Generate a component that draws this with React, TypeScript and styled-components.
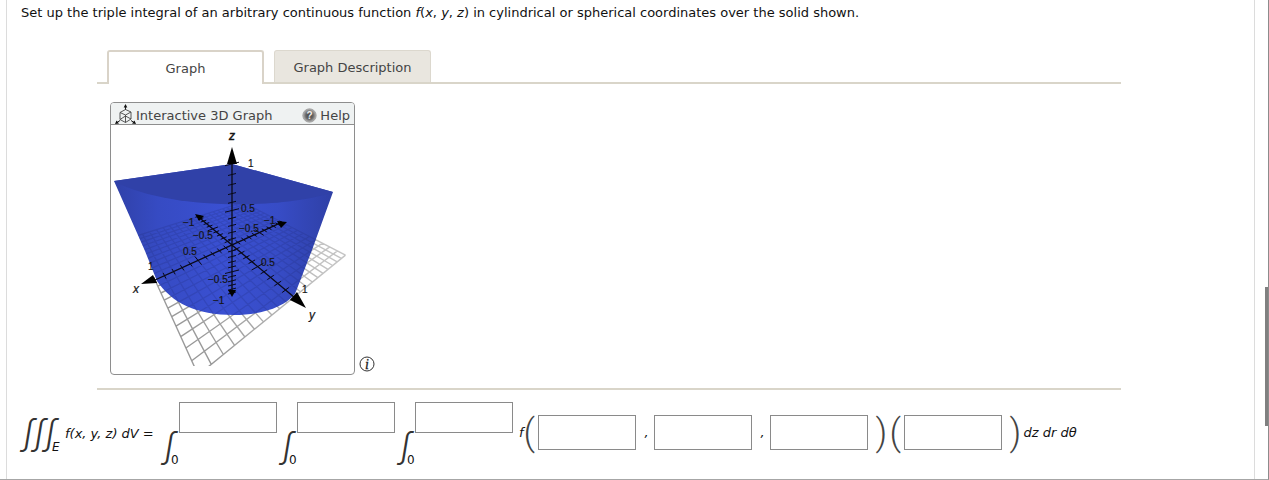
import React from "react";
import styled, { createGlobalStyle } from "styled-components";

const GlobalStyle = createGlobalStyle`
  * { box-sizing: border-box; }
  body {
    margin: 0;
    background: #fff;
    color: #111;
    font: 13px/18px "DejaVu Sans", Verdana, sans-serif;
  }
`;

const Page = styled.div`
  position: relative;
  display: flex;
  min-height: 100vh;
  padding: 0 13px 0 6px;
  border-right: 1px solid #8c8c8c;
  border-bottom: 1px solid #a6a6a6;
`;

const ScrollThumb = styled.div`
  position: absolute;
  top: 60%;
  right: 0;
  width: 3px;
  height: 29%;
  background: #808080;
`;

const Question = styled.main`
  flex: 1;
  padding: 4px 14px 12px;
  border: solid #dcdcdc;
  border-width: 0 1px;
`;

const Prompt = styled.p`
  margin: 0;
`;

const Figure = styled.section`
  max-width: 1024px;
  margin: 28px 0 12px 76px;
  border-bottom: 2px solid #d9d5c9;
`;

const TabList = styled.div`
  display: flex;
  gap: 10px;
  padding-left: 10px;
  border-bottom: 2px solid #d9d5c9;
`;

const Tab = styled.button<{ $active?: boolean }>`
  width: 157px;
  height: ${(p) => (p.$active ? 34 : 32)}px;
  margin-bottom: ${(p) => (p.$active ? -2 : 0)}px;
  padding: 2px 0 0;
  border: ${(p) => (p.$active ? "2px solid #d9d3c8" : "1px solid #dcd8ce")};
  border-bottom: 0;
  border-radius: 3px 3px 0 0;
  background: ${(p) => (p.$active ? "#fff" : "#e9e6df")};
  color: #444;
  font: inherit;
`;

const TabPanel = styled.div`
  display: flex;
  align-items: flex-end;
  gap: 4px;
  padding: 18px 13px 13px;
`;

const GraphCard = styled.div`
  width: 245px;
  border: 1px solid #8e8e8e;
  border-radius: 4px;
  overflow: hidden;
`;

const GraphHeader = styled.div`
  display: flex;
  align-items: center;
  height: 22px;
  padding: 0 4px;
  border-bottom: 1px solid #8e8e8e;
  background: #eff2f2;
  color: #444;
`;

const GraphTitle = styled.span`
  flex: 1;
  padding-top: 4px;
`;

const HelpButton = styled.button`
  display: flex;
  align-items: center;
  gap: 3px;
  padding: 4px 0 0;
  border: 0;
  background: none;
  color: #444;
  font: inherit;
`;

const InfoButton = styled.button`
  display: flex;
  margin-bottom: 3px;
  padding: 0;
  border: 0;
  background: none;
`;

const Plot = styled.svg`
  display: block;
  width: 100%;
`;

const Formula = styled.form`
  display: flex;
  align-items: center;
  height: 64px;
  white-space: nowrap;
`;

const Triple = styled.span`
  display: flex;
  align-items: flex-end;
  width: 44px;
  padding: 0 0 4px 2px;
`;

const Sign = styled.span`
  width: 11px;
  font: italic 300 34px/42px Inter, "Liberation Serif", serif;
  color: #333;
`;

const Sub = styled.span`
  margin-left: -4px;
  font-size: 12px;
  line-height: 11px;
`;

const Integral = styled.span`
  display: flex;
  align-self: stretch;
  margin-right: 3px;
`;

const Limits = styled.span`
  display: flex;
  align-items: flex-end;
  width: 17px;
  padding-left: 2px;
`;

const Field = styled.input<{ $tall?: boolean }>`
  width: 98px;
  height: ${(p) => (p.$tall ? 35 : 31)}px;
  padding: 0 6px;
  border: 1px solid #8a8a8a;
  border-radius: 0;
  background: #fff;
  font: inherit;
`;

const Paren = styled.span<{ $close?: boolean }>`
  width: 14px;
  margin-left: ${(p) => (p.$close ? 8 : 0)}px;
  font: 300 36px/36px Roboto, sans-serif;
  color: #444;
`;

const Lhs = styled.i`
  width: 97px;
`;

const Comma = styled.i`
  width: 18px;
  padding-left: 4px;
  text-align: center;
`;

const Args = styled.span`
  display: flex;
  align-items: center;
  margin-left: 3px;
  padding-bottom: 3px;
`;

type Pt = [number, number];

/* Perspective projections of the floor plane and of the vertical axis. */
const floor = (x: number, y: number): Pt => {
  const w = 1 - 0.2126 * x - 0.2917 * y;
  return [(232 - 109.95 * x - 23.8 * y) / w, (245 - 24.5 * x - 34.6 * y) / w];
};
const height = (z: number): Pt => [232, (245 - 123 * z) / (1 - 0.256 * z)];
const seg = (a: Pt, b: Pt) =>
  `M${a[0].toFixed(1)} ${a[1].toFixed(1)}L${b[0].toFixed(1)} ${b[1].toFixed(1)}`;

const steps = Array.from({ length: 21 }, (_, i) => (i - 10) / 10);
const gridPath = steps
  .map((t) => seg(floor(t, -1), floor(t, 1)) + seg(floor(-1, t), floor(1, t)))
  .join("");
const tickPath = steps
  .filter((t) => t !== 0)
  .map((t) => {
    const s = Math.abs(t) === 0.5 ? 0.09 : 0.05;
    const [zx, zy] = height(t);
    const h = Math.abs(t) === 0.5 || t === 1 ? 7 : 4;
    return (
      seg(floor(t, -s), floor(t, s)) +
      seg(floor(-s, t), floor(s, t)) +
      seg([zx - h, zy + h / 4], [zx + h, zy - h / 4])
    );
  })
  .join("");

const SOLID =
  "M114 181L232 164L333 192L312 250L295 294C284 307 262 315 234 315C196 315 172 303 157 281L145 251Z";
const TOP = "M114 181L232 164L333 192C287 209 168 211 114 181Z";

function SolidPlot() {
  const labels: [number, number, string][] = [
    [248, 167, "1"], [241, 212, "0.5"], [239, 232, "−0.5"], [264, 224, "−1"],
    [183, 226, "−1"], [193, 239, "−0.5"], [183, 255, "0.5"], [261, 266, "0.5"],
    [208, 283, "−0.5"], [213, 304, "−1"], [148, 270, "1"], [302, 293, "1"],
  ];
  return (
    <Plot viewBox="111 125 243 249" role="img" aria-label="Solid plotted on x, y and z axes">
      <defs>
        <linearGradient id="side" x1="114" x2="333" y1="0" y2="0" gradientUnits="userSpaceOnUse">
          <stop offset="0" stopColor="#3041a8" />
          <stop offset="0.2" stopColor="#364bc3" />
          <stop offset="0.5" stopColor="#3a50d2" />
          <stop offset="0.75" stopColor="#374cc6" />
          <stop offset="1" stopColor="#2f40a6" />
        </linearGradient>
        <linearGradient id="mesh" x1="200" x2="320" y1="350" y2="255" gradientUnits="userSpaceOnUse">
          <stop offset="0" stopColor="#999" />
          <stop offset="1" stopColor="#c4c4c4" />
        </linearGradient>
        <clipPath id="view"><path d="M156 280L240 230H354V366H156Z" /></clipPath>
        <clipPath id="solid"><path d={SOLID} /></clipPath>
      </defs>
      <path d={gridPath} clipPath="url(#view)" stroke="url(#mesh)" strokeWidth="1.4" fill="none" />
      <path d={SOLID} fill="url(#side)" />
      <path d={gridPath} clipPath="url(#solid)" stroke="#1c2870" strokeOpacity="0.2" strokeWidth="1.2" fill="none" />
      <path d={TOP} fill="#3041a8" />
      <g stroke="#0a0a18" fill="none">
        <path d={tickPath} />
        <path d={seg(floor(1, 0), floor(-1, 0)) + seg(floor(0, -1), floor(0, 1)) + seg(height(1), height(-1))} strokeWidth="1.3" />
      </g>
      <g fill="#000">
        <path d="M232 147L237 164H227Z" />
        <path d="M141 284L153 275L157 283Z" />
        <path d="M306 308L290 300L297 292Z" />
        <path d="M287 222L277 221L281 228Z" />
        <path d="M195 214L204 216L199 221Z" />
        <path d="M232 297L228 290H236Z" />
      </g>
      <g fill="#151515" stroke="#151515" strokeWidth="0.2" fontFamily="Liberation Sans, Arial, sans-serif" fontSize="10">
        {labels.map(([x, y, t]) => (
          <text key={`${x}-${y}`} x={x} y={y}>{t}</text>
        ))}
        <g fontSize="12" fontStyle="italic">
          <text x="229" y="140" strokeWidth="0.5">z</text>
          <text x="133" y="293">x</text>
          <text x="309" y="319">y</text>
        </g>
      </g>
    </Plot>
  );
}

function CubeIcon() {
  return (
    <svg width="21" height="20" viewBox="0 0 21 20" fill="none" stroke="#444" aria-hidden="true">
      <path d="M10.500 2V6M2 18.500L5 16.500M19 18.500L16 16.500" stroke="#222" />
      <path d="M10.500 5.500L16 8V15L10.500 18.500L5 15.500V8.500ZM5 8.500L10.500 11L16 8M10.500 11V18.500M5 15.500L10.500 12L16 15" strokeWidth="0.9" />
      <path d="M10.500 0L12.300 3.500H8.700ZM0 20L1.500 16.500L4 19.500ZM21 20L19.500 16.500L17 19.500Z" fill="#111" stroke="none" />
    </svg>
  );
}

function HelpIcon() {
  return (
    <svg width="15" height="15" viewBox="0 0 15 15" aria-hidden="true">
      <defs>
        <radialGradient id="help" cx="0.5" cy="0.5" r="0.5">
          <stop offset="0" stopColor="#444" />
          <stop offset="0.55" stopColor="#666" />
          <stop offset="1" stopColor="#bbb" />
        </radialGradient>
      </defs>
      <circle cx="7.500" cy="7.500" r="6.700" fill="url(#help)" stroke="#999" strokeWidth="0.8" />
      <text x="7.500" y="11" textAnchor="middle" fontSize="10" fontWeight="bold" fontFamily="Liberation Sans, sans-serif" fill="#eee">?</text>
    </svg>
  );
}

function InfoIcon() {
  return (
    <svg width="16" height="16" viewBox="0 0 16 16" aria-hidden="true">
      <circle cx="8" cy="8" r="7" fill="#fff" stroke="#333" />
      <text x="8" y="13" textAnchor="middle" fontSize="14" fontStyle="italic" fontFamily="Liberation Serif, serif" fill="#222" stroke="#222" strokeWidth="0.3">i</text>
    </svg>
  );
}

export default function App() {
  return (
    <Page>
      <GlobalStyle />
      <Question>
        <Prompt>
          Set up the triple integral of an arbitrary continuous function <i>f</i>(<i>x</i>, <i>y</i>, <i>z</i>) in
          cylindrical or spherical coordinates over the solid shown.
        </Prompt>
        <Figure>
          <TabList role="tablist">
            <Tab role="tab" aria-selected="true" $active>Graph</Tab>
            <Tab role="tab" aria-selected="false">Graph Description</Tab>
          </TabList>
          <TabPanel role="tabpanel">
            <GraphCard>
              <GraphHeader>
                <CubeIcon />
                <GraphTitle>Interactive 3D Graph</GraphTitle>
                <HelpButton type="button"><HelpIcon />Help</HelpButton>
              </GraphHeader>
              <SolidPlot />
            </GraphCard>
            <InfoButton type="button" aria-label="Graph information"><InfoIcon /></InfoButton>
          </TabPanel>
        </Figure>
        <Formula>
          <Triple><Sign>∫</Sign><Sign>∫</Sign><Sign>∫</Sign><Sub><i>E</i></Sub></Triple>
          <Lhs>f(x, y, z) dV =</Lhs>
          {["Outer", "Middle", "Inner"].map((name) => (
            <Integral key={name}>
              <Limits><Sign>∫</Sign><Sub>0</Sub></Limits>
              <Field aria-label={`${name} upper limit`} />
            </Integral>
          ))}
          <Args>
            <i>f</i><Paren>(</Paren>
            <Field $tall aria-label="First argument" />
            <Comma>,</Comma>
            <Field $tall aria-label="Second argument" />
            <Comma>,</Comma>
            <Field $tall aria-label="Third argument" />
            <Paren $close>)</Paren><Paren>(</Paren>
            <Field $tall aria-label="Volume factor" />
            <Paren $close>)</Paren>
            <i>dz dr dθ</i>
          </Args>
        </Formula>
      </Question>
      <ScrollThumb />
    </Page>
  );
}
